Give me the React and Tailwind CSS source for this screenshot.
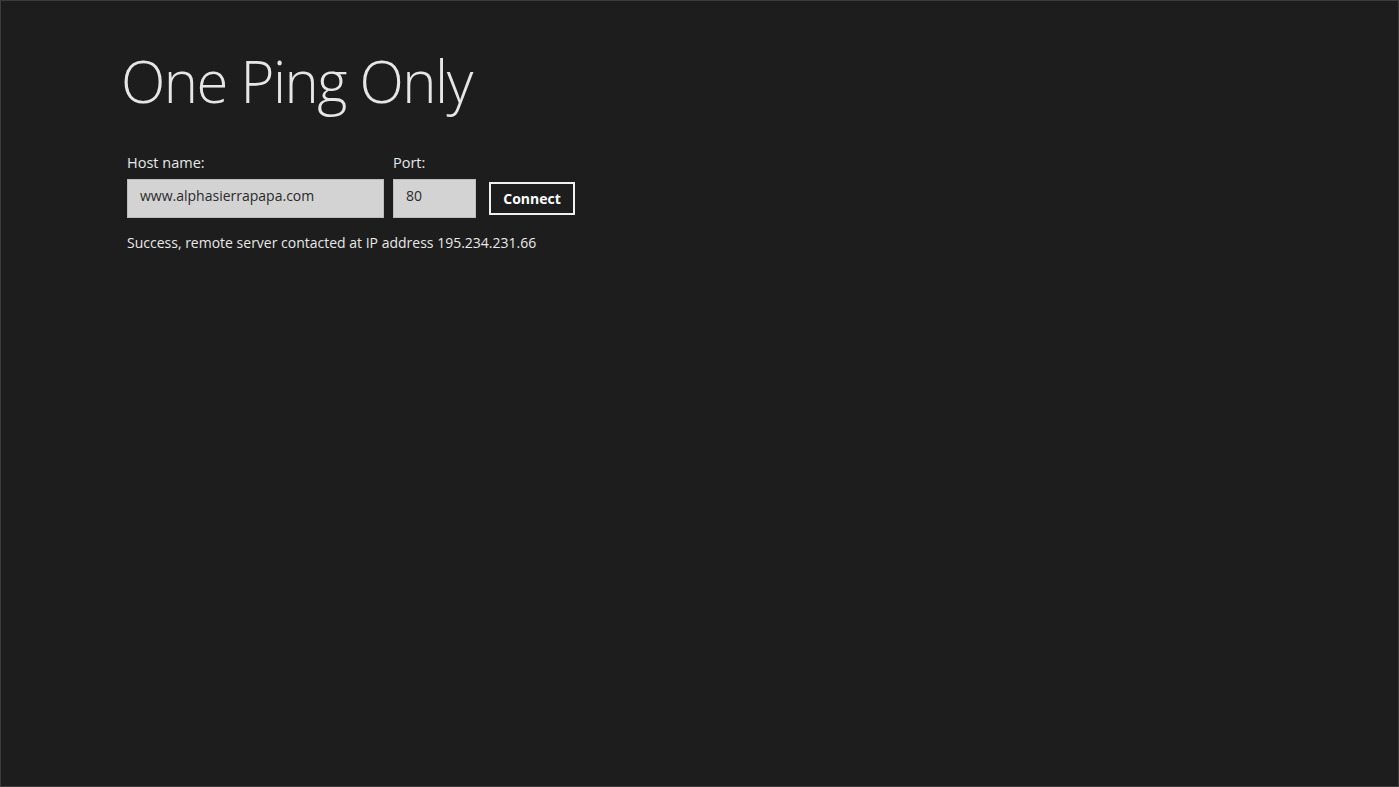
export default function App() {
  return (
    <div className="h-[787px] w-full overflow-hidden border border-[#3c3c3c] bg-[#1d1d1d] font-['Open_Sans','Noto_Sans',sans-serif] text-[#e8e8e8]">
      <div className="pl-[120px] pt-[40px]">
        <h1 className="text-[58px] font-light leading-[80px] tracking-[-1.5px] text-[#e6e6e6]">One Ping Only</h1>

        <div className="mt-[33px] flex items-end pl-[6px]">
          <div className="flex flex-col">
            <label className="text-[14.5px] leading-[18px]">Host name:</label>
            <div className="mt-[7px] flex h-[39px] w-[257px] items-center border border-[#bdbdbd] bg-[#d3d3d3] pl-[12px] pb-[6px] text-[14px] text-[#2a2a2a]">
              www.alphasierrapapa.com
            </div>
          </div>
          <div className="ml-[9px] flex flex-col">
            <label className="text-[14.5px] leading-[18px]">Port:</label>
            <div className="mt-[7px] flex h-[39px] w-[83px] items-center border border-[#bdbdbd] bg-[#d3d3d3] pl-[12px] pb-[6px] text-[14px] text-[#2a2a2a]">
              80
            </div>
          </div>
          <button className="mb-[3px] ml-[13px] h-[33px] w-[86px] border-2 border-[#f0f0f0] bg-[#1d1d1d] text-[14px] font-bold text-white">
            Connect
          </button>
        </div>

        <p className="mt-[15px] pl-[6px] text-[14px] leading-[20px] text-[#e8e8e8]">
          Success, remote server contacted at IP address 195.234.231.66
        </p>
      </div>
    </div>
  )
}
